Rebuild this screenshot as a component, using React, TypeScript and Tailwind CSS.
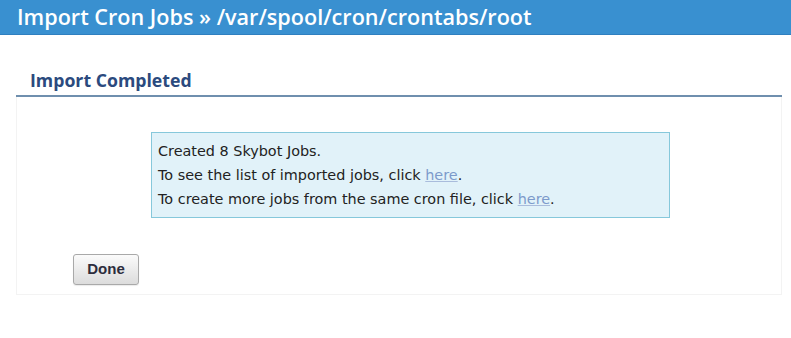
import React from "react";

export default function App() {
  return (
    <div className="w-[791px] h-[338px] bg-white overflow-hidden font-['DejaVu_Sans',sans-serif]">
      {/* Title bar */}
      <div className="h-[35px] bg-[#3990d0] border-b border-[#2f7fbf] flex items-center pl-[17px]">
        <h1 className="text-white text-[21.6px] font-semibold font-['Open_Sans',sans-serif] leading-none">
          Import Cron Jobs » /var/spool/cron/crontabs/root
        </h1>
      </div>

      <div className="pl-[16px] pr-[9px] pt-[33px]">
        {/* Section header */}
        <div className="border-b-2 border-[#6f8fae] pl-[14px] pb-[3px]">
          <h2 className="text-[#2b4a7e] text-[17.7px] font-bold font-['Open_Sans',sans-serif] leading-[24px]">
            Import Completed
          </h2>
        </div>

        {/* Panel */}
        <div className="border border-t-0 border-[#f3f3f3] h-[198px] pt-[35px]">
          <div className="ml-[134px] w-[519px] bg-[#e1f2f9] border border-[#86c8db] px-[6px] pt-[6px] pb-[6px] text-[14.4px] text-[#222] leading-[24px]">
            <p>Created 8 Skybot Jobs.</p>
            <p>
              To see the list of imported jobs, click{" "}
              <a href="#" className="text-[#7c9acb] underline decoration-[#a9bcdc]">here</a>.
            </p>
            <p>
              To create more jobs from the same cron file, click{" "}
              <a href="#" className="text-[#7c9acb] underline decoration-[#a9bcdc]">here</a>.
            </p>
          </div>

          <div className="mt-[36px] ml-[56px]">
            <button className="w-[66px] h-[31px] rounded-[3px] border border-[#a9a9a9] bg-gradient-to-b from-[#fbfbfb] to-[#dcdcdc] text-[15px] font-bold text-[#2d2d3d] font-['Liberation_Sans',sans-serif] shadow-[0_1px_1px_rgba(0,0,0,0.08)]">
              Done
            </button>
          </div>
        </div>
      </div>
    </div>
  );
}
